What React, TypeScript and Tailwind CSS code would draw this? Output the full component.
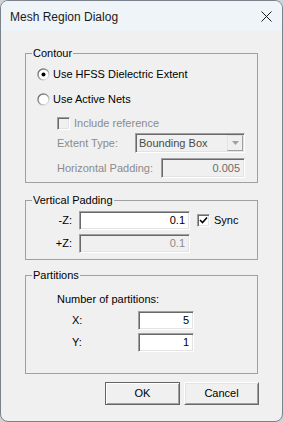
import React from 'react';

const sunken =
  'border border-t-[#a0a0a0] border-l-[#a0a0a0] border-b-white border-r-white shadow-[inset_1px_1px_0_#696969,inset_-1px_-1px_0_#e3e3e3]';

function Radio({ id, checked }: { id: string; checked?: boolean }) {
  return (
    <svg width="13" height="13" viewBox="0 0 13 13" className="shrink-0">
      <defs>
        <linearGradient id={id} x1="0" y1="0" x2="1" y2="1">
          <stop offset="0" stopColor="#5f5f5f" />
          <stop offset="0.55" stopColor="#a8a8a8" />
          <stop offset="1" stopColor="#ffffff" />
        </linearGradient>
      </defs>
      <circle cx="6.5" cy="6.5" r="5.5" fill="#ffffff" stroke={`url(#${id})`} strokeWidth="1.4" />
      {checked && <circle cx="6.5" cy="6.5" r="2" fill="#000000" />}
    </svg>
  );
}

function Check({ checked, disabled }: { checked?: boolean; disabled?: boolean }) {
  return (
    <div
      className={`w-[13px] h-[13px] shrink-0 flex items-center justify-center ${sunken} ${
        disabled ? 'bg-[#f0f0f0]' : 'bg-white'
      }`}
    >
      {checked && (
        <svg width="9" height="9" viewBox="0 0 9 9">
          <path d="M1 4 L3.5 6.5 L8 1.5" fill="none" stroke="#000" strokeWidth="1.6" />
        </svg>
      )}
    </div>
  );
}

function Field({
  value,
  width,
  disabled,
}: {
  value: string;
  width: string;
  disabled?: boolean;
}) {
  return (
    <div
      className={`${width} h-full flex items-center justify-end pr-[4px] ${sunken} ${
        disabled ? 'bg-[#f0f0f0] text-[#8b8b8b]' : 'bg-white text-black'
      }`}
    >
      {value}
    </div>
  );
}

function Group({ title, children, className }: { title: string; children: React.ReactNode; className?: string }) {
  return (
    <fieldset className={`border border-[#a0a0a0] p-0 m-0 min-w-0 ${className ?? ''}`}>
      <legend className="ml-[6px] px-[1px] leading-[14px]">{title}</legend>
      {children}
    </fieldset>
  );
}

export default function App() {
  return (
    <div
      className="w-[283px] h-[422px] bg-[#cfd2d6] text-[11px] text-black"
      style={{ fontFamily: '"Liberation Sans", Arial, sans-serif' }}
    >
      <div className="w-full h-full rounded-[8px] border border-[#7c828c] overflow-hidden bg-[#f0f0f0] flex flex-col">
        <div className="h-[30px] shrink-0 bg-[#eff4f9] flex items-center justify-between pl-[9px] pr-[9px]">
          <span className="text-[12px] text-[#1a1a1a] pt-[1px]">Mesh Region Dialog</span>
          <svg width="11" height="11" viewBox="0 0 11 11" className="mr-[1px]">
            <path d="M0.5 0.5 L10.5 10.5 M10.5 0.5 L0.5 10.5" stroke="#1a1a1a" strokeWidth="1" />
          </svg>
        </div>

        <div className="flex flex-col px-[24px]">
          <Group title="Contour" className="mt-[15px]">
            <div className="flex flex-col pb-[4px]">
              <div className="h-[20px] mt-[4px] flex items-center pl-[11px] gap-[3px]">
                <Radio id="r1" checked />
                <span>Use HFSS Dielectric Extent</span>
              </div>
              <div className="h-[20px] mt-[5px] flex items-center pl-[11px] gap-[3px]">
                <Radio id="r2" />
                <span>Use Active Nets</span>
              </div>
              <div className="h-[20px] mt-[4px] flex items-center pl-[31px] gap-[4px] text-[#8b8b8b]">
                <Check disabled />
                <span>Include reference</span>
              </div>
              <div className="h-[20px] flex items-center pl-[31px]">
                <span className="w-[78px] text-[#8b8b8b]">Extent Type:</span>
                <div className={`w-[110px] h-full flex items-center bg-[#f0f0f0] ${sunken}`}>
                  <span className="flex-1 pl-[3px] text-[#4a4a4a]">Bounding Box</span>
                  <div className="w-[16px] h-[16px] mr-[1px] flex items-center justify-center border border-t-[#e3e3e3] border-l-[#e3e3e3] border-b-[#a0a0a0] border-r-[#a0a0a0] bg-[#f0f0f0]">
                    <svg width="7" height="4" viewBox="0 0 7 4">
                      <path d="M0 0 H7 L3.5 4 Z" fill="#a0a0a0" />
                    </svg>
                  </div>
                </div>
              </div>
              <div className="h-[20px] mt-[5px] flex items-center pl-[31px]">
                <span className="w-[104px] text-[#8b8b8b]">Horizontal Padding:</span>
                <div className={`w-[84px] h-full flex items-center justify-end pr-[4px] bg-[#f0f0f0] text-[#6d6d6d] ${sunken}`}>
                  0.005
                </div>
              </div>
            </div>
          </Group>

          <Group title="Vertical Padding" className="mt-[10px]">
            <div className="flex flex-col pb-[6px]">
              <div className="h-[19px] mt-[4px] flex items-center">
                <span className="w-[46px] text-right">-Z:</span>
                <div className="ml-[7px] h-full">
                  <Field value="0.1" width="w-[111px]" />
                </div>
                <div className="ml-[7px]">
                  <Check checked />
                </div>
                <span className="ml-[4px]">Sync</span>
              </div>
              <div className="h-[19px] mt-[4px] flex items-center">
                <span className="w-[46px] text-right">+Z:</span>
                <div className="ml-[7px] h-full">
                  <Field value="0.1" width="w-[111px]" disabled />
                </div>
              </div>
            </div>
          </Group>

          <Group title="Partitions" className="mt-[8px]">
            <div className="flex flex-col pb-[21px]">
              <div className="h-[14px] mt-[10px] flex items-center pl-[31px]">Number of partitions:</div>
              <div className="h-[19px] mt-[5px] flex items-center pl-[46px]">
                <span className="w-[66px]">X:</span>
                <Field value="5" width="w-[56px]" />
              </div>
              <div className="h-[19px] mt-[3px] flex items-center pl-[46px]">
                <span className="w-[66px]">Y:</span>
                <Field value="1" width="w-[56px]" />
              </div>
            </div>
          </Group>

          <div className="mt-[8px] -mr-[1px] flex justify-end gap-[4px]">
            <button className="w-[75px] h-[23px] bg-[#f0f0f0] border border-[#646464] shadow-[inset_1px_1px_0_#ffffff,inset_-1px_-1px_0_#a0a0a0]">
              OK
            </button>
            <button className="w-[75px] h-[23px] bg-[#f0f0f0] border border-t-white border-l-white border-b-[#696969] border-r-[#696969] shadow-[inset_1px_1px_0_#e3e3e3,inset_-1px_-1px_0_#a0a0a0]">
              Cancel
            </button>
          </div>
        </div>
      </div>
    </div>
  );
}
